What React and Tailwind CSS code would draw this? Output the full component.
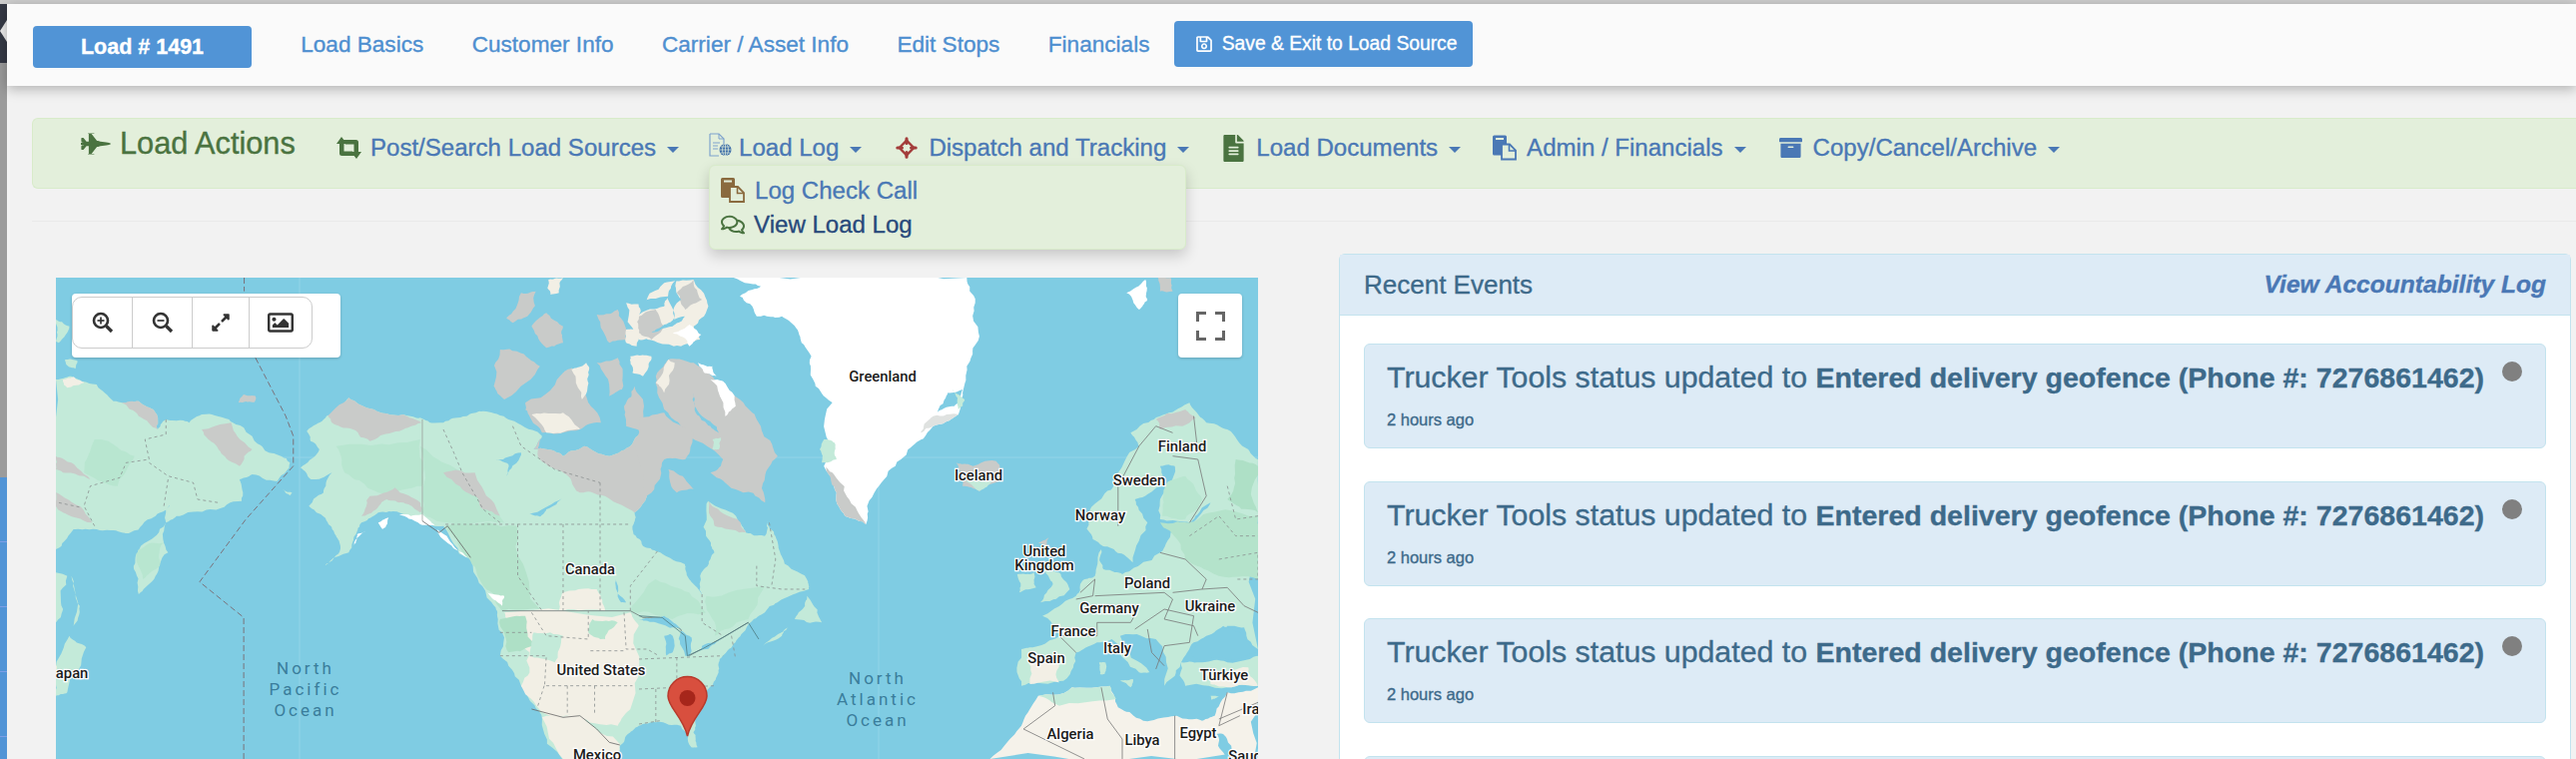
import React from "react";
import {
  FaFighterJet,
  FaFileAlt,
  FaArchive,
  FaRegComments,
  FaRegSave,
  FaExpandAlt,
  FaRegImage,
} from "react-icons/fa";

const Caret = () => (
  <span className="ml-[11px] mt-[3px] w-0 h-0 border-x-[6px] border-x-transparent border-t-[6px] border-t-[#4a78b5]" />
);

const RetweetIcon = () => (
  <svg width="25" height="22" viewBox="0 0 25 22" fill="#4a7340">
    <path d="M5 0L10.5 7H7.5V14.5H16L20 19H5.5A2.5 2.5 0 0 1 3 16.5V7H0Z" />
    <path d="M20 22L14.5 15H17.5V7.5H9L5 3H19.5A2.5 2.5 0 0 1 22 5.5V15H25Z" />
  </svg>
);

const LogIcon = () => (
  <svg width="23" height="24" viewBox="0 0 23 24" className="mb-[6px]">
    <path d="M1 1h9l5 5v5M1 1v22h9" fill="none" stroke="#7fa3cd" strokeWidth="1.2" />
    <path d="M10 1v5h5M4 10h7M4 13h5M4 16h5" fill="none" stroke="#7fa3cd" strokeWidth="1" />
    <circle cx="16.5" cy="17" r="6" fill="#3f6fa8" />
    <path d="M10.5 17h12M16.5 11v12M12 14h9M12 20h9" stroke="#e3efdb" strokeWidth="0.7" />
    <ellipse cx="16.5" cy="17" rx="3" ry="6" fill="none" stroke="#e3efdb" strokeWidth="0.7" />
  </svg>
);

const TargetIcon = () => (
  <svg width="22" height="22" viewBox="0 0 24 24">
    <path d="M12 4L20 12L12 20L4 12Z" fill="none" stroke="#a33c3a" strokeWidth="2.6" strokeLinejoin="round" />
    <path d="M12 2v5M12 17v5M2 12h5M17 12h5" stroke="#a33c3a" strokeWidth="3.4" strokeLinecap="round" />
  </svg>
);

const PasteIcon = ({ color, width = 24, height = 25 }) => (
  <svg width={width} height={height} viewBox="0 0 24 25">
    <path d="M1.5 0h11a1.5 1.5 0 0 1 1.5 1.5V20H1.5A1.5 1.5 0 0 1 0 18.5v-17A1.5 1.5 0 0 1 1.5 0Z" fill={color} />
    <rect x="3" y="2.5" width="8" height="2" fill="#e3efdb" />
    <path d="M9 9h8l6 6v9H9Z" fill="#e3efdb" stroke={color} strokeWidth="1.8" />
    <path d="M16.5 9v6.5H23" fill="none" stroke={color} strokeWidth="1.6" />
  </svg>
);

const ZoomIcon = ({ plus }) => (
  <svg width="22" height="22" viewBox="0 0 22 22" fill="none" stroke="#333">
    <circle cx="9" cy="9" r="7" strokeWidth="2.6" />
    <path d="M14.5 14.5L20 20" strokeWidth="3.2" />
    <path d="M5.5 9h7" strokeWidth="1.7" />
    {plus && <path d="M9 5.5v7" strokeWidth="1.7" />}
  </svg>
);

const actions = [
  { label: "Post/Search Load Sources", icon: <RetweetIcon />, box: "w-[25px] mr-[9px]", gap: "mr-[30px]" },
  { label: "Load Log", icon: <LogIcon />, box: "w-[23px] mr-[7px]", gap: "mr-[34px]", open: true },
  { label: "Dispatch and Tracking", icon: <TargetIcon />, box: "w-[22px] mr-[11px]", gap: "mr-[34px]" },
  { label: "Load Documents", icon: <FaFileAlt size={27} color="#4a7340" />, box: "w-[21px] mr-[12px]", gap: "mr-[32px]" },
  { label: "Admin / Financials", icon: <PasteIcon color="#4a78b5" width={24} height={28} />, box: "w-[24px] mr-[10px]", gap: "mr-[33px]" },
  { label: "Copy/Cancel/Archive", icon: <FaArchive size={24} color="#4a78b5" />, box: "w-[23px] mr-[11px]", gap: "" },
];

const labels = [
  ["Canada", 591, 570],
  ["United States", 602, 671],
  ["Mexico", 598, 756],
  ["Greenland", 884, 377],
  ["Iceland", 980, 476],
  ["Finland", 1184, 447],
  ["Sweden", 1141, 481],
  ["Norway", 1102, 516],
  ["United", 1046, 552],
  ["Kingdom", 1046, 566],
  ["Poland", 1149, 584],
  ["Germany", 1111, 609],
  ["Ukraine", 1212, 607],
  ["France", 1075, 632],
  ["Italy", 1119, 649],
  ["Spain", 1048, 659],
  ["Türkiye", 1226, 676],
  ["Algeria", 1072, 735],
  ["Libya", 1144, 741],
  ["Egypt", 1200, 734],
  ["Japan", 68, 674],
  ["Iraq", 1257, 710],
  ["Saudi", 1249, 757],
];

const oceans = [
  ["North", 306, 669],
  ["Pacific", 306, 690],
  ["Ocean", 306, 711],
  ["North", 879, 679],
  ["Atlantic", 879, 700],
  ["Ocean", 879, 721],
];

// jagged coastlines from a rough outline, same result every render
const noise = (a, b) => {
  const v = Math.sin(a * 12.9898 + b * 78.233) * 43758.5453;
  return v - Math.floor(v) - 0.5;
};

const roughen = (points) => {
  let pts = points.trim().split(/\s+/).map((p) => p.split(",").map(Number));
  for (let pass = 0; pass < 3; pass++) {
    const next = [];
    pts.forEach((p, i) => {
      const q = pts[(i + 1) % pts.length];
      const d = Math.min(34, Math.hypot(q[0] - p[0], q[1] - p[1]) * 0.24);
      next.push(p, [(p[0] + q[0]) / 2 + noise(p[0], q[1]) * d, (p[1] + q[1]) / 2 + noise(q[0], p[1]) * d]);
    });
    pts = next;
  }
  return pts.map((p) => p.join(",")).join(" ");
};

const Land = ({ fill, points }) => <polygon fill={fill} points={roughen(points)} />;

const Line = ({ points, color = "#8a8f8f", dash = "3 3", width = 0.8 }) => (
  <polyline
    points={points}
    fill="none"
    stroke={color}
    strokeWidth={width}
    strokeDasharray={dash}
    vectorEffect="non-scaling-stroke"
  />
);

const WorldMap = () => (
  <svg viewBox="56 278 1204 482" className="block w-full h-full">
    <rect x="56" y="278" width="1204" height="482" fill="#7fcce3" />
    <path d="M300 278V760M880 278V760M56 458H1260" stroke="#93d4e8" strokeWidth="1" />

    {/* west half */}
    <g transform="translate(0 260) scale(0.42088 0.33333)" className="blur-[0.4px]">
      {/* russia */}
      <Land fill="#c3ead9" points="133,360 170,350 230,375 270,425 330,425 365,450 375,510 395,480 450,490 480,465 545,480 600,530 640,580 690,610 660,665 600,645 570,660 575,725 500,750 420,770 395,790 400,880 370,950 330,1005 318,920 335,860 395,790 410,725 370,770 310,820 290,820 230,810 175,810 133,870" />
      <Land fill="#c9cbc9" points="133,590 180,620 215,660 150,640 133,630" />
      <Land fill="#c9cbc9" points="480,510 550,490 600,570 570,620 520,570" />
      <Land fill="#c9cbc9" points="290,430 330,425 365,450 375,510 330,470" />
      <Land fill="#c9cbc9" points="133,700 190,740 220,790 150,760 133,740" />
      <Land fill="#f2efe5" points="150,360 175,352 200,370 160,385" />
      <Land fill="#b8e6d0" points="225,540 320,590 280,680 200,640" />
      <Land fill="#b8e6d0" points="330,870 390,850 380,920 340,960" />
      <Land fill="#c3ead9" points="133,940 160,950 150,1050 133,1090" />
      <Land fill="#c3ead9" points="170,950 190,1040 175,1100" />
      <Land fill="#c3ead9" points="165,1130 205,1165 160,1300 133,1310 133,1220" />
      <Land fill="#c9cbc9" points="568,430 580,405 608,410 605,428" />
      <Land fill="#c3ead9" points="155,300 185,305 180,328 160,318" />
      <Land fill="#c3ead9" points="133,180 165,200 140,250 133,245" />
      <Land fill="#c3ead9" points="672,690 695,700 690,708" />

      {/* north america */}
      <Land fill="#c3ead9" points="730,515 770,480 790,460 830,415 890,450 960,465 1000,475 1055,490 1110,470 1150,455 1210,480 1290,530 1270,570 1340,590 1390,560 1450,590 1500,560 1540,510 1560,520 1570,620 1540,700 1510,760 1505,810 1530,860 1560,875 1630,915 1640,960 1670,1005 1675,930 1700,880 1680,830 1685,725 1755,780 1775,820 1820,830 1825,785 1845,830 1860,890 1920,960 1925,990 1850,1030 1820,1060 1790,1085 1750,1150 1720,1190 1710,1240 1685,1290 1650,1370 1650,1420 1660,1465 1645,1465 1620,1400 1560,1390 1520,1400 1490,1430 1475,1460 1475,1510 1345,1510 1290,1380 1240,1280 1190,1190 1185,1080 1170,1030 1120,900 1055,800 1010,790 950,760 900,760 860,790 850,815 830,880 772,918 810,860 800,830 780,790 735,740 770,700 790,640 740,660 715,625 760,570" />
      <Land fill="#b8e6d0" points="800,560 1000,540 1005,680 900,700 820,640" />
      <Land fill="#b4e3cb" points="1060,800 1230,800 1285,1050 1195,1055 1150,980 1110,890" />
      <Land fill="#b8e6d0" points="1000,560 1100,640 1200,790 1060,790 1005,760" />
      <Land fill="#b8e6d0" points="1560,960 1640,1000 1680,1060 1600,1080 1500,1055" />
      <Land fill="#c9cbc9" points="1290,530 1270,570 1340,590 1390,560 1450,590 1500,560 1540,510 1560,520 1570,620 1540,700 1510,760 1440,710 1380,700 1340,640 1280,590" />
      <Land fill="#c9cbc9" points="780,470 830,415 890,450 960,465 1003,490 960,510 880,545 840,510 790,490" />
      <Land fill="#c9cbc9" points="860,770 880,710 940,685 1000,730 1000,760 960,730 920,720 885,760" />
      <Land fill="#c9cbc9" points="1055,640 1130,640 1190,770 1150,750 1100,690" />
      <Land fill="#ffffff" points="950,765 1005,765 1040,800 1000,795" />
      <Land fill="#ffffff" points="1040,810 1100,880 1120,900 1080,860" />
      <Land fill="#ffffff" points="900,790 925,775 910,810" />
      <Land fill="#ffffff" points="850,825 870,815 840,860" />
      <Land fill="#ffffff" points="1160,1000 1200,1010 1195,1040" />
      <Land fill="#f2efe5" points="1200,1060 1500,1060 1520,1100 1500,1350 1470,1400 1380,1370 1290,1360 1240,1280 1260,1180 1210,1090" />
      <Land fill="#f2efe5" points="1340,1000 1420,990 1440,1055 1330,1055" />
      <Land fill="#f2efe5" points="1345,1510 1290,1375 1380,1370 1475,1455 1475,1510" />
      <Land fill="#aee0c6" points="1190,1080 1250,1070 1270,1160 1210,1180" />
      <Land fill="#c3ead9" points="1270,1120 1340,1130 1320,1210 1260,1190" />
      <Land fill="#b8e6d0" points="1410,1080 1470,1090 1440,1140 1400,1120" />
      <Land fill="#7fcce3" points="1180,600 1240,580 1230,610 1205,650 1210,615" />
      <Land fill="#7fcce3" points="1260,765 1340,715 1300,750 1285,772" />
      <Land fill="#7fcce3" points="1465,960 1490,1030 1478,1030" />

      {/* arctic islands */}
      <Land fill="#c9cbc9" points="1205,175 1240,100 1275,95 1255,170 1220,190" />
      <Land fill="#f2efe5" points="1305,60 1340,55 1330,100 1310,105" />
      <Land fill="#c9cbc9" points="1265,200 1300,160 1340,200 1340,250 1300,265" />
      <Land fill="#c9cbc9" points="1420,165 1470,150 1490,240 1450,250" />
      <Land fill="#f2efe5" points="1490,130 1530,140 1568,230 1520,240" />
      <Land fill="#f2efe5" points="1490,210 1515,205 1515,260 1490,250" />
      <Land fill="#c9cbc9" points="1175,380 1190,270 1230,275 1285,320 1200,420" />
      <Land fill="#c9cbc9" points="1250,430 1340,340 1360,325 1400,430 1430,490 1380,510 1290,520 1260,470" />
      <Land fill="#f2efe5" points="1265,465 1340,460 1380,510 1300,520" />
      <Land fill="#f2efe5" points="1360,330 1395,310 1400,350 1385,420" />
      <Land fill="#c9cbc9" points="1420,310 1470,295 1480,390 1450,410" />
      <Land fill="#f2efe5" points="1500,290 1550,290 1530,350 1505,340" />
      <Land fill="#c9cbc9" points="1485,440 1510,380 1530,480 1540,530 1490,500" />

      {/* borders */}
      <Line points="581,54 581,95" color="#7a5a60" dash="6 3" />
      <Line points="608,295 680,470 698,530 698,620 585,780 475,968 580,1075 580,1500" color="#7a5a60" dash="6 3" />
      <Line points="1005,480 1005,785" dash="" color="#9aa09c" />
      <Line points="1005,785 1045,820 1065,800 1120,895" dash="" color="#666" />
      <Line points="1195,1055 1500,1055 1530,1075 1570,1075 1620,1110 1640,1190 1720,1135 1780,1090" dash="" color="#6f7a78" />
      <Line points="1265,1350 1340,1375 1380,1370 1420,1410 1450,1450 1475,1458" dash="" color="#666" />
      <Line points="1060,795 1500,795" />
      <Line points="1232,795 1232,950 1290,1055" />
      <Line points="1340,795 1340,1055" />
      <Line points="1428,670 1428,1055" />
      <Line points="1500,1055 1500,980 1568,870" />
      <Line points="1055,510 1080,580 1100,640 1150,750 1190,790" />
      <Line points="1220,500 1240,560 1320,630 1428,670" />
      <Line points="1190,1190 1300,1190 1296,1280 1505,1280" />
      <Line points="1265,1060 1300,1130 1400,1140 1400,1055" />
      <Line points="1350,1280 1350,1370" />
      <Line points="1415,1280 1415,1370" />
      <Line points="1485,1060 1490,1170 1540,1170 1568,1190" />
      <Line points="1405,1175 1490,1175" />
      <Line points="1190,1120 1265,1120" />
      <Line points="1295,1280 1280,1340" />
      <Line points="395,480 395,525 345,540 355,600 300,610 285,655 215,680 200,740 225,800" />
      <Line points="355,610 400,650 460,670 470,720 520,730" />
      <Line points="400,660 390,740" />
      <Line points="140,730 195,745" />
    </g>

    {/* east half */}
    <g transform="translate(640 260) scale(0.42088 0.33333)" className="blur-[0.4px]">
      <Land fill="#7fcce3" points="0,1080 60,1070 100,1110 40,1090" />
      <Land fill="#7fcce3" points="60,1130 75,1125 80,1180 65,1190" />
      <Land fill="#7fcce3" points="100,1115 125,1135 120,1190 110,1190" />
      <Land fill="#7fcce3" points="150,1160 200,1135 180,1155 145,1175" />
      <Land fill="#c3ead9" points="400,1010 435,1090 370,1080 395,1040" />
      <Land fill="#c3ead9" points="295,1160 355,1105 340,1130" />
      <Land fill="#b8e6d0" points="160,1010 300,980 260,1080 180,1130" />

      {/* arctic islands */}
      <Land fill="#f2efe5" points="0,150 60,70 130,60 165,140 130,200 145,240 100,260 20,240 0,180" />
      <Land fill="#c9cbc9" points="0,170 40,150 60,200 30,240 0,220" />
      <Land fill="#c9cbc9" points="90,100 130,60 150,120 110,150" />
      <Land fill="#7fcce3" points="0,130 70,110 60,140 0,165" />
      <Land fill="#7fcce3" points="70,100 90,60 100,120 80,190" />
      <Land fill="#7fcce3" points="60,195 110,170 80,200 30,218" />
      <Land fill="#ffffff" points="80,220 120,195 148,225 120,260" />
      <Land fill="#c9cbc9" points="40,350 70,300 130,310 180,360 240,420 280,480 330,590 300,650 300,730 230,690 170,640 200,600 100,500 60,450" />
      <Land fill="#ffffff" points="140,310 175,320 185,350 155,340" />
      <Land fill="#ffffff" points="170,360 200,365 230,440 205,470" />
      <Land fill="#f2efe5" points="40,370 70,300 85,310 60,400" />
      <Land fill="#7fcce3" points="130,400 150,470 190,520 170,500 135,460" />
      <Land fill="#c9cbc9" points="0,470 60,460 130,520 110,600 60,600 30,700 0,730" />
      <Land fill="#c9cbc9" points="70,630 130,690 90,700" />
      <Land fill="#c3ead9" points="175,540 195,535 190,570 175,570" />
      <Land fill="#ffffff" points="1160,100 1205,60 1210,120 1190,150" />
      <Land fill="#c9cbc9" points="1235,54 1265,54 1270,95 1240,95" />
      <Land fill="#c9cbc9" points="165,725 235,780 255,820 180,800" />

      {/* greenland */}
      <Land fill="#ffffff" points="225,54 290,80 240,110 280,170 340,170 380,220 410,290 420,380 460,430 440,620 470,700 490,770 540,795 560,700 610,620 650,560 700,500 760,465 770,400 780,320 810,230 800,130 780,54" />
      <Land fill="#dfe2e0" points="700,500 760,465 700,470 670,520" />
      <Land fill="#c9cbc9" points="445,620 470,700 490,770 540,795 500,720 460,640" />
      <Land fill="#c3ead9" points="440,540 465,550 470,600 435,610 430,570" />
      <Land fill="#7fcce3" points="735,400 770,390 750,440 710,460" />
      <Land fill="#c3ead9" points="745,390 775,420 760,450" />

      {/* iceland and uk */}
      <Land fill="#c9cbc9" points="755,610 795,620 850,605 862,660 810,695 770,680" />
      <Land fill="#c3ead9" points="775,665 840,665 810,695" />
      <Land fill="#c3ead9" points="900,945 940,940 945,985 905,1000" />
      <Land fill="#c3ead9" points="960,930 1000,940 1025,990 955,1030 985,975" />
      <Land fill="#c9cbc9" points="950,850 975,835 970,860" />

      {/* europe */}
      <Land fill="#c3ead9" points="1473,600 1450,570 1400,510 1350,490 1310,430 1240,470 1170,520 1190,560 1130,670 1070,760 1080,840 1130,870 1175,910 1210,790 1180,720 1240,680 1275,620 1240,720 1240,780 1310,790 1360,730 1310,810 1265,820 1240,880 1150,945 1105,930 1100,870 1085,950 1060,960 1040,1010 960,1070 1005,1130 930,1165 910,1170 910,1280 1010,1265 1040,1180 1090,1150 1125,1140 1190,1240 1215,1240 1145,1130 1230,1140 1250,1280 1290,1210 1320,1150 1370,1130 1400,1100 1440,1105 1473,1170" />
      <Land fill="#b4e3cb" points="1240,790 1310,790 1360,760 1473,770 1473,960 1380,950 1300,900" />
      <Land fill="#aee0c6" points="1420,600 1473,620 1473,760 1400,720" />
      <Land fill="#b8e6d0" points="1250,680 1300,650 1340,720 1300,780 1245,770" />
      <Land fill="#c9cbc9" points="1230,480 1300,450 1325,475 1240,510" />
      <Land fill="#f2efe5" points="930,1190 1000,1210 1000,1270 930,1275" />
      <Land fill="#7fcce3" points="1240,620 1275,620 1250,690 1240,700" />
      <Land fill="#7fcce3" points="1310,1190 1350,1130 1390,1100 1440,1130 1473,1180 1400,1200 1340,1200" />
      <Land fill="#c3ead9" points="1290,1210 1340,1210 1400,1210 1473,1190 1473,1280 1400,1285 1300,1280" />
      <Land fill="#f2efe5" points="1350,1240 1450,1225 1473,1280 1400,1285 1360,1275" />
      <Land fill="#c3ead9" points="1095,1210 1110,1210 1108,1245 1097,1245" />
      <Land fill="#c3ead9" points="1145,1265 1175,1260 1170,1285" />
      <Land fill="#c3ead9" points="1360,1310 1380,1312 1362,1322" />

      {/* africa and middle east */}
      <Land fill="#f5f2ea" points="835,1500 910,1400 950,1310 1030,1285 1120,1280 1140,1345 1200,1385 1280,1370 1340,1385 1370,1370 1400,1300 1473,1285 1473,1500" />
      <Land fill="#c3ead9" points="950,1310 1030,1285 1120,1280 1135,1320 1000,1340" />
      <Land fill="#7fcce3" points="1375,1425 1390,1425 1425,1500 1400,1500" />

      <Line points="915,1410 990,1340 985,1300" dash="" color="#777" />
      <Line points="915,1410 1060,1500" dash="" color="#777" />
      <Line points="1100,1285 1115,1380 1150,1440 1150,1500" dash="" color="#777" />
      <Line points="1275,1370 1275,1500" dash="" color="#777" />
      <Line points="1380,1380 1473,1330" dash="" color="#777" />
      <Line points="1400,1300 1380,1400 1430,1370" dash="" color="#777" />
      <Line points="1050,1000 1085,960 1080,1010 1040,1020" dash="" color="#777" />
      <Line points="1085,1010 1250,1000 1270,1020 1250,1080 1320,1100 1330,1130" dash="" color="#777" />
      <Line points="1190,1045 1170,1090 1090,1090 1090,1130" dash="" color="#777" />
      <Line points="1180,1110 1250,1050 1320,1070 1310,1150 1250,1160 1230,1230" dash="" color="#777" />
      <Line points="1210,1110 1220,1180 1250,1220" dash="" color="#777" />
      <Line points="1040,1180 1000,1130 1090,1130" dash="" color="#777" />
      <Line points="1240,880 1300,900 1350,960 1340,990 1270,1000" dash="" color="#777" />
      <Line points="1340,990 1400,985 1440,1040 1473,1060" dash="" color="#777" />
      <Line points="1140,800 1140,680 1190,560 1230,500 1270,520" dash="" color="#777" />
      <Line points="1270,590 1330,600 1350,710 1310,790" dash="" color="#777" />
      <Line points="1320,470 1330,580" dash="" color="#777" />
      <Line points="1400,680 1420,780 1473,770" />
      <Line points="1310,830 1380,770 1420,830 1473,830" />
      <Line points="1380,900 1473,880 1473,960 1420,960" />
      <Line points="0,1395 50,1385" />
      <Line points="0,1200 200,1190" />
      <Line points="90,1195 90,1300" />
      <Line points="0,1290 180,1280" />
      <Line points="40,1290 40,1390" />
      <Line points="220,1130 230,1200" />
      <Line points="150,1005 150,1090 200,1130" />
      <Line points="280,920 280,980 340,990 395,990" />
      <Line points="310,790 325,900 315,985" />
      <Line points="200,1135 260,1090 285,1140" dash="" color="#4c7a80" />
      <Line points="0,1070 55,1075 110,1130 115,1190 150,1170 200,1135" dash="" color="#4c7a80" />
    </g>

    {oceans.map(([name, x, y], i) => (
      <text
        key={i}
        x={x}
        y={y}
        textAnchor="middle"
        dominantBaseline="central"
        className="font-['Roboto',sans-serif] text-[17px] tracking-[3px] fill-[#3a7d9b]"
      >
        {name}
      </text>
    ))}
    {labels.map(([name, x, y]) => (
      <text
        key={name}
        x={x}
        y={y}
        textAnchor="middle"
        dominantBaseline="central"
        className="font-['Roboto',sans-serif] text-[14.8px] font-medium fill-[#1c1c1c] stroke-white stroke-[2.5px] [paint-order:stroke]"
      >
        {name}
      </text>
    ))}

    {/* pin */}
    <path
      d="M688.5 737C684 718 669 708 669 697A19.5 19.5 0 0 1 708 697C708 708 693 718 688.5 737Z"
      fill="#d84f3e"
      stroke="#b83a2c"
      strokeWidth="1.5"
    />
    <ellipse cx="688.5" cy="699" rx="8" ry="8" fill="#a6261b" />
  </svg>
);

const eventBox = "h-[105px] bg-[#ddebf6] border border-[#c3e3ee] rounded-md";

const EventItem = () => (
  <div className={`flex justify-between pl-[22px] pr-[23px] text-[#3d6a8a] ${eventBox}`}>
    <div>
      <div className="mt-[16px] text-[30.3px] leading-[34px] whitespace-nowrap">
        Trucker Tools status updated to{" "}
        <strong className="font-bold text-[28.55px]">Entered delivery geofence (Phone #: 7276861462)</strong>
      </div>
      <div className="mt-[15px] text-[16.5px] leading-[20px]">2 hours ago</div>
    </div>
    <span className="w-[20px] h-[20px] mt-[17px] rounded-full bg-[#808080]" />
  </div>
);

export default function App() {
  return (
    <div className="w-[2580px] h-[760px] overflow-hidden bg-[#f2f2f2] font-['Liberation_Sans',Arial,sans-serif] [-webkit-text-stroke:0.35px]">
      <div className="h-[4px] bg-[#cecece]" />
      <div className="flex">
        {/* Left rail */}
        <div className="relative w-[7px] shrink-0 h-[756px] flex flex-col">
          <div className="h-[59px] bg-[#353945]" />
          <div className="h-[415px] bg-[#9b9b9b]" />
          <div className="flex-1 bg-[#5194d6]">
            <div className="h-[65px] border-b border-[#7d9fe6]" />
            <div className="h-[65px] border-b border-[#7d9fe6]" />
            <div className="h-[65px] border-b border-[#7d9fe6]" />
            <div className="h-[65px] border-b border-[#7d9fe6]" />
          </div>
          <span className="absolute left-0 top-[16px] w-0 h-0 border-y-[11px] border-y-transparent border-r-[7px] border-r-[#ececec]" />
        </div>

        <div className="flex-1 min-w-0">
          {/* Top nav */}
          <nav className="relative z-10 h-[82px] bg-[#fafafa] shadow-[0_3px_12px_rgba(0,0,0,0.28)] flex items-start pl-[26px]">
            <div className="mt-[22px] w-[219px] h-[42px] flex items-center justify-center bg-[#5194d6] rounded text-white font-bold text-[21.5px]">
              Load # 1491
            </div>
            <ul className="flex ml-[25px] text-[#4e8fd0] text-[22.6px] leading-[26px] mt-[28px] whitespace-nowrap">
              <li className="px-[24.2px]">Load Basics</li>
              <li className="px-[24.2px]">Customer Info</li>
              <li className="px-[24.2px]">Carrier / Asset Info</li>
              <li className="px-[24.2px]">Edit Stops</li>
              <li className="px-[24.2px]">Financials</li>
            </ul>
            <div className="mt-[17px] w-[299px] h-[46px] flex items-center pl-[21px] gap-[9px] bg-[#5194d6] rounded text-white text-[19.3px] whitespace-nowrap">
              <FaRegSave size={18} />
              Save &amp; Exit to Load Source
            </div>
          </nav>

          <main className="pl-[25px]">
            {/* Load actions */}
            <div className="mt-[32px] h-[71px] flex items-start bg-[#e3efdb] border-y border-l border-[#d8ebca] rounded-l-md">
              <div className="ml-[48px] mt-[9px] w-[256px] flex items-center text-[#4a7340] text-[30.7px] leading-[32px]">
                <FaFighterJet size={30} className="mr-[9px]" />
                Load Actions
              </div>
              <ul className="flex items-center h-[30px] mt-[14px] text-[#4a78b5] text-[24.05px] whitespace-nowrap">
                {actions.map((a) => (
                  <li key={a.label} className={`relative flex items-center ${a.gap}`}>
                    <span className={`flex justify-center ${a.box}`}>{a.icon}</span>
                    {a.label}
                    <Caret />
                    {a.open && (
                      <div className="absolute z-20 left-0 top-[35px] w-[478px] h-[85px] bg-[#e3efdb] border border-[#d8ebca] rounded-md shadow-[0_6px_14px_rgba(0,0,0,0.18)] pl-[11px] pt-[10px]">
                        <div className="flex items-center h-[30px]">
                          <span className="w-[24px] mr-[10px]"><PasteIcon color="#8a6a3e" /></span>
                          Log Check Call
                        </div>
                        <div className="flex items-center h-[38px] text-[#27497b]">
                          <span className="w-[24px] mr-[9px]"><FaRegComments size={24} color="#4a7340" /></span>
                          View Load Log
                        </div>
                      </div>
                    )}
                  </li>
                ))}
              </ul>
            </div>

            <hr className="mt-[32px] border-t border-[#eaeaea]" />

            <div className="flex items-start mt-[32px]">
              {/* Map */}
              <div className="relative mt-[24px] ml-[24px] w-[1204px] h-[482px] shrink-0 overflow-hidden">
                <WorldMap />
                <div className="absolute left-[16px] top-[16px] w-[269px] h-[64px] bg-white rounded shadow-[0_1px_3px_rgba(0,0,0,0.2)]">
                  <div className="flex h-[52px] mt-[3px] w-[241px] border border-[#cccccc] rounded-[10px]">
                    <span className="w-[60px] flex items-center justify-center border-r border-[#cccccc]"><ZoomIcon plus /></span>
                    <span className="w-[60px] flex items-center justify-center border-r border-[#cccccc]"><ZoomIcon /></span>
                    <span className="w-[57px] flex items-center justify-center border-r border-[#cccccc]"><FaExpandAlt size={20} color="#333" /></span>
                    <span className="flex-1 flex items-center justify-center"><FaRegImage size={26} color="#333" /></span>
                  </div>
                </div>
                <div className="absolute right-[16px] top-[16px] w-[64px] h-[64px] flex items-center justify-center bg-white rounded shadow-[0_1px_3px_rgba(0,0,0,0.2)]">
                  <svg width="29" height="29" viewBox="0 0 29 29" fill="none" stroke="#666" strokeWidth="3">
                    <path d="M1.5 10V1.5H10M19 1.5H27.5V10M1.5 19V27.5H10M19 27.5H27.5V19" />
                  </svg>
                </div>
              </div>

              {/* Recent events */}
              <section className="ml-[81px] w-[1234px] h-[600px] bg-white border border-[#c3e3ee] rounded-t-md">
                <div className="h-[61px] flex items-center justify-between px-[24px] bg-[#ddebf6] border-b border-[#c3e3ee]">
                  <span className="text-[26px] text-[#3d6a8a]">Recent Events</span>
                  <span className="text-[24.6px] italic font-bold text-[#4a78b5]">View Accountability Log</span>
                </div>
                <div className="flex flex-col gap-[32.5px] pt-[28px] px-[24px]">
                  <EventItem />
                  <EventItem />
                  <EventItem />
                  <div className={eventBox} />
                </div>
              </section>
            </div>
          </main>
        </div>
      </div>
    </div>
  );
}
